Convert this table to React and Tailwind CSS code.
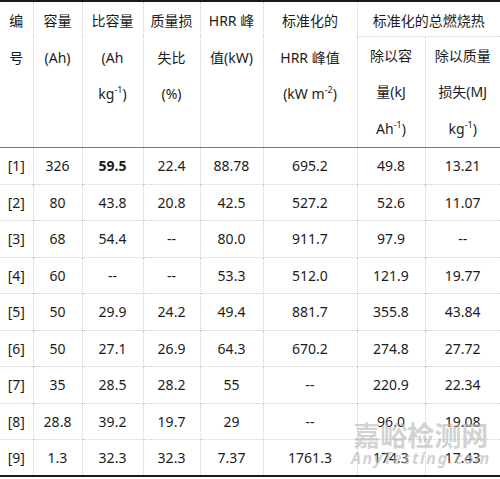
const rows = [
  ["[1]", "326", "59.5", "22.4", "88.78", "695.2", "49.8", "13.21"],
  ["[2]", "80", "43.8", "20.8", "42.5", "527.2", "52.6", "11.07"],
  ["[3]", "68", "54.4", "--", "80.0", "911.7", "97.9", "--"],
  ["[4]", "60", "--", "--", "53.3", "512.0", "121.9", "19.77"],
  ["[5]", "50", "29.9", "24.2", "49.4", "881.7", "355.8", "43.84"],
  ["[6]", "50", "27.1", "26.9", "64.3", "670.2", "274.8", "27.72"],
  ["[7]", "35", "28.5", "28.2", "55", "--", "220.9", "22.34"],
  ["[8]", "28.8", "39.2", "19.7", "29", "--", "96.0", "19.08"],
  ["[9]", "1.3", "32.3", "32.3", "7.37", "1761.3", "174.3", "17.43"],
];

const Sup = ({ children }) => (
  <sup className="text-[9px] leading-none relative -top-[6px]">{children}</sup>
);

const th = "align-top text-center font-normal leading-[36.5px] pt-px border-l border-dotted border-[#cfcfcf] first:border-l-0";

export default function App() {
  return (
    <div
      className="relative w-[500px] h-[479px] bg-white text-[#1c1c1c] text-[14px] overflow-hidden"
      style={{ fontFamily: '"Noto Sans", "Noto Sans CJK SC", sans-serif' }}
    >
      <table className="w-[500px] table-fixed border-collapse border-t-2 border-b-2 border-solid border-[#1a1a1a]">
        <colgroup>
          <col className="w-[33px]" />
          <col className="w-[49px]" />
          <col className="w-[61px]" />
          <col className="w-[57px]" />
          <col className="w-[63px]" />
          <col className="w-[94px]" />
          <col className="w-[68px]" />
          <col className="w-[75px]" />
        </colgroup>
        <thead>
          <tr className="h-[35px]">
            <th rowSpan={2} className={th}>编<br />号</th>
            <th rowSpan={2} className={th}>容量<br />(Ah)</th>
            <th rowSpan={2} className={th}>比容量<br />(Ah<br />kg<Sup>-1</Sup>)</th>
            <th rowSpan={2} className={th}>质量损<br />失比<br />(%)</th>
            <th rowSpan={2} className={th}>HRR 峰<br />值(kW)</th>
            <th rowSpan={2} className={th}>标准化的<br />HRR 峰值<br />(kW m<Sup>-2</Sup>)</th>
            <th
              colSpan={2}
              className="text-center font-normal align-middle pt-[3px] border-l border-b border-dotted border-[#cfcfcf]"
            >
              标准化的总燃烧热
            </th>
          </tr>
          <tr className="h-[111px] border-b border-solid border-[#777]">
            <th className="align-top text-center font-normal leading-[36.5px] pt-[1px] border-l border-dotted border-[#cfcfcf]">
              除以容<br />量(kJ<br />Ah<Sup>-1</Sup>)
            </th>
            <th className="align-top text-center font-normal leading-[36.5px] pt-[1px] border-l border-dotted border-[#cfcfcf]">
              除以质量<br />损失(MJ<br />kg<Sup>-1</Sup>)
            </th>
          </tr>
        </thead>
        <tbody>
          {rows.map((r, i) => (
            <tr key={i} className="h-[36.5px] border-t border-dotted border-[#cfcfcf] first:border-t-0">
              {r.map((c, j) => (
                <td
                  key={j}
                  className={
                    "text-center align-middle p-0 border-l border-dotted border-[#cfcfcf] first:border-l-0" +
                    (i === 0 && j === 2 ? " font-bold" : "")
                  }
                >
                  {c}
                </td>
              ))}
            </tr>
          ))}
        </tbody>
      </table>

      {/* watermark */}
      <div className="absolute left-[351px] top-[420px] pointer-events-none select-none flex flex-col items-center text-[#b4b4b4]/60">
        <div className="text-[27px] font-bold leading-[32px]">嘉峪检测网</div>
        <div className="text-[16px] italic font-bold leading-[16px] tracking-[1.5px] -mt-[2px]">AnyTesting.com</div>
      </div>
    </div>
  );
}
